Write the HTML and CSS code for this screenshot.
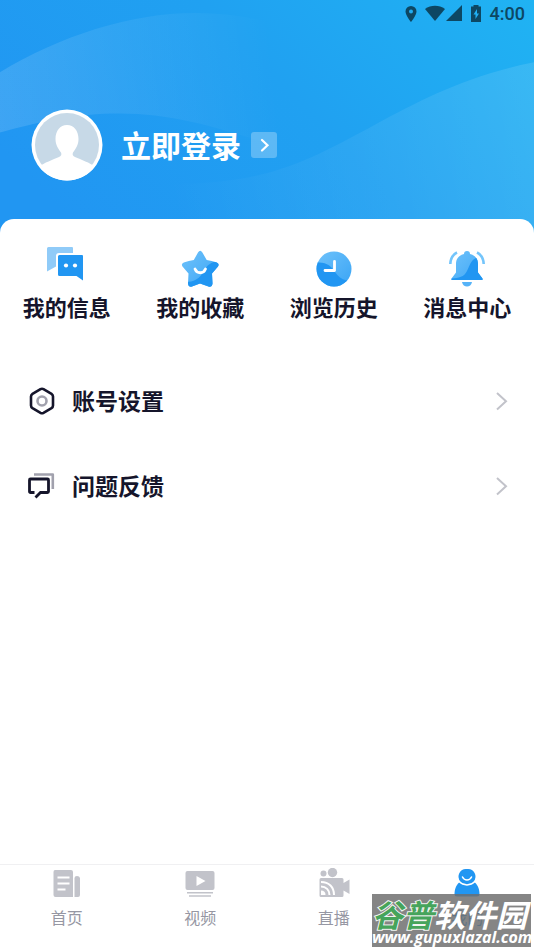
FILE: index.html
```html
<!DOCTYPE html>
<html lang="zh-CN">
<head>
<meta charset="utf-8">
<meta name="viewport" content="width=device-width, initial-scale=1">
<title>我的</title>
<link rel="stylesheet" href="styles.css">
</head>
<body>
<div class="app">
  <header class="hero">
    <svg class="hero-bg" viewBox="0 0 534 240" preserveAspectRatio="none" aria-hidden="true">
      <defs>
        <linearGradient id="sky" gradientUnits="userSpaceOnUse" x1="90" y1="240" x2="440" y2="-110">
          <stop offset="0" stop-color="#2196f2"/><stop offset=".5" stop-color="#20a1f1"/><stop offset="1" stop-color="#20b4f3"/>
        </linearGradient>
        <linearGradient id="waveA" gradientUnits="userSpaceOnUse" x1="0" y1="100" x2="275" y2="70">
          <stop offset="0" stop-color="#fff" stop-opacity=".13"/><stop offset="1" stop-color="#fff" stop-opacity="0"/>
        </linearGradient>
        <linearGradient id="waveB" gradientUnits="userSpaceOnUse" x1="170" y1="200" x2="534" y2="120">
          <stop offset="0" stop-color="#fff" stop-opacity="0"/><stop offset="1" stop-color="#fff" stop-opacity=".11"/>
        </linearGradient>
      </defs>
      <path fill="url(#sky)" d="M0 0H534V240H0z"/>
      <path fill="url(#waveA)" d="M0 72C60 36 130 13 195 13C235 13 270 20 300 32L275 145C220 128 175 113 120 113C75 113 40 121 0 132z"/>
      <path fill="url(#waveB)" d="M60 170C130 184 200 188 260 174C350 153 410 86 534 62V240H60z"/>
    </svg>
    <div class="status">
      <svg width="14" height="18" viewBox="0 0 14 18" aria-hidden="true"><path fill-rule="evenodd" d="M7 1a5.500 5.500 0 0 0-5.500 5.500C1.500 10.500 7 17 7 17s5.500-6.500 5.500-10.500A5.500 5.500 0 0 0 7 1zm0 3.500a2 2 0 1 1 0 4 2 2 0 0 1 0-4z"/></svg>
      <svg class="wifi" width="20" height="18" viewBox="0 0 20 18" aria-hidden="true"><path d="M0 4C6-.300 14-.300 20 4L10 16z"/></svg>
      <svg width="16" height="18" viewBox="0 0 16 18" aria-hidden="true"><path d="M16 0V16H0z"/></svg>
      <svg class="battery" width="12" height="18" viewBox="0 0 12 18" aria-hidden="true"><path fill-rule="evenodd" d="M3.500 0h5v1.500H11V17H1V1.500h2.500zM7 4L3.500 9.500H5.500v4.500L9 8.500H7z"/></svg>
      <span>4:00</span>
    </div>
    <a class="login" href="#login">
      <svg class="avatar" viewBox="0 0 72 72" aria-hidden="true">
        <circle cx="36" cy="36" r="35.500" fill="#fff"/>
        <circle cx="36" cy="36" r="32" fill="#c7d9e7"/>
        <path fill="#fff" d="M36 16c-7 0-11.500 6-11.500 14 0 6 3 10 5.500 13.500 1 2 0 3.500-2 4.500-6 2.500-15 6-20 9.500C14 66 25 71.500 36 71.500S58 66 64 57.500c-5-3.500-14-7-20-9.500-2-1-3-2.500-2-4.500 2.500-3.500 5.500-7.500 5.500-13.500 0-8-4.500-14-11.500-14z"/>
      </svg>
      <span class="login-text">立即登录</span>
      <svg class="login-go" viewBox="0 0 26 26" aria-hidden="true"><rect width="26" height="26" rx="3" fill="#fff" fill-opacity=".27"/><path d="M11 8l5.500 5.200L11 18.500" fill="none" stroke="#fff" stroke-width="2.200" stroke-linecap="round"/></svg>
    </a>
  </header>

  <main class="sheet">
    <nav class="shortcuts" aria-label="快捷入口">
      <a href="#info">
        <svg width="40" height="40" viewBox="0 0 40 40" aria-hidden="true">
          <path fill="#90cbf8" d="M1.500 0H25q1 0 1 1V6H12q-3 0-3 3V19.500L0 24.500V1.500Q0 0 1.500 0z"/>
          <path fill="#2196f2" d="M12.500 8H35q1 0 1 1V33.500L29.500 29H12.500q-1.500 0-1.500-1.500v-18Q11 8 12.500 8z"/>
          <circle cx="19" cy="18.500" r="2.100" fill="#fff"/><circle cx="28" cy="18.500" r="2.100" fill="#fff"/>
        </svg>
        <span>我的信息</span>
      </a>
      <a href="#favorites">
        <svg width="40" height="40" viewBox="0 0 40 40" aria-hidden="true">
          <defs><linearGradient id="pale" x1="0" y1="0" x2="1" y2="1"><stop stop-color="#74c5fb"/><stop offset="1" stop-color="#37a3f5"/></linearGradient>
          <clipPath id="star"><path d="M18 5.500q2.200-3.500 4.400 0l4.300 7.500q5 .800 10 2.500 3 1.200 1.300 4l-6 7 .5 10q-.500 4-4 3L20 36.500l-8 3q-3.500 1-4-3l.5-10-6-7q-1.700-2.800 1.300-4 5-1.700 10-2.500z"/></clipPath></defs>
          <g clip-path="url(#star)"><path fill="url(#pale)" d="M0 0H40V40H0z"/><path fill="#2196f2" d="M40 13C31 15 27 18 24 24C20 32 13 35 6 35V40H40z"/></g>
          <path d="M15 22c2 5 8.500 5 10.500 0" fill="none" stroke="#fff" stroke-width="2.800" stroke-linecap="round"/>
        </svg>
        <span>我的收藏</span>
      </a>
      <a href="#history">
        <svg width="40" height="40" viewBox="0 0 40 40" aria-hidden="true">
          <defs><clipPath id="disc"><circle cx="20" cy="22" r="17.500"/></clipPath></defs>
          <g clip-path="url(#disc)"><path fill="url(#pale)" d="M0 0H40V40H0z"/><path fill="#2196f2" d="M0 16C12 14 17 19 21 25C26 32 31 34 36 33L30 40H0z"/></g>
          <path d="M20.500 14.500v9H11" fill="none" stroke="#fff" stroke-width="2.800" stroke-linecap="round" stroke-linejoin="round"/>
        </svg>
        <span>浏览历史</span>
      </a>
      <a href="#messages">
        <svg width="40" height="40" viewBox="0 0 40 40" aria-hidden="true">
          <defs><clipPath id="bell"><path d="M17 7q0-3 3-3t3 3c5.500 1.500 8 5 8 10v8.500l4.500 6v1.500H4.500v-1.500l4.500-6V17c0-5 2.500-8.500 8-10z"/></clipPath></defs>
          <g clip-path="url(#bell)"><path fill="url(#pale)" d="M0 0H40V40H0z"/><path fill="#2196f2" d="M29 11C24 13 23 18 20 24C17 30 12 31 4 31.500V34H37V11z"/></g>
          <path fill="#56b3f8" d="M15 35h10c-1 6-9 6-10 0z"/>
          <path d="M10 5.500C6 7.500 3.500 12 3.300 17M30 5.500c4 2 6.500 6.500 6.700 11.500" fill="none" stroke="#74c5fb" stroke-width="2.600"/>
        </svg>
        <span>消息中心</span>
      </a>
    </nav>

    <nav class="menu" aria-label="设置">
      <a href="#settings">
        <svg width="28" height="28" viewBox="0 0 28 28" aria-hidden="true"><path d="M12.500 2.200q1.500-.800 3 0l8 4.600q1.500 1 1.500 2.700v9q0 1.700-1.500 2.700l-8 4.600q-1.500.800-3 0l-8-4.600Q3 20.200 3 18.500v-9q0-1.700 1.500-2.700z" fill="none" stroke="#15152b" stroke-width="2.600"/><circle cx="14" cy="14" r="4.500" fill="none" stroke="#a1a1ad" stroke-width="2.600"/></svg>
        <span>账号设置</span>
        <svg class="chevron" width="14" height="20" viewBox="0 0 14 20" aria-hidden="true"><path d="M2 2l9 8.200L2 18.500"/></svg>
      </a>
      <a href="#feedback">
        <svg width="28" height="28" viewBox="0 0 28 28" aria-hidden="true"><path d="M6 2.500H24.800V17" fill="none" stroke="#a1a1ad" stroke-width="2.600" stroke-linejoin="round"/><path d="M6.500 20.500H2.500q-1 0-1-1V8q0-1 1-1H19.500q1 0 1 1V19.500q0 1-1 1H12.500L7.500 25.500" fill="none" stroke="#15152b" stroke-width="2.800"/></svg>
        <span>问题反馈</span>
        <svg class="chevron" width="14" height="20" viewBox="0 0 14 20" aria-hidden="true"><path d="M2 2l9 8.200L2 18.500"/></svg>
      </a>
    </nav>
  </main>

  <footer class="bottom">
    <nav class="tabs" aria-label="主导航">
      <a href="#home">
        <svg width="32" height="32" viewBox="0 0 32 32" aria-hidden="true"><path fill="#c2c3ca" d="M4 2H20q2 0 2 2V29H4.500Q2.500 29 2.500 27V4Q2.500 2 4 2zM23.500 10q0-2 2.500-2t3 2V27q0 2-2 2h-3.500z"/><path stroke="#fff" stroke-width="2" d="M6.500 9.500h12M6.500 15.500h12M6.500 21.500h8"/></svg>
        <span>首页</span>
      </a>
      <a href="#video">
        <svg width="32" height="32" viewBox="0 0 32 32" aria-hidden="true"><rect x="1.500" y="3" width="29" height="19" rx="2" fill="#c2c3ca"/><path fill="#fff" d="M12.500 8l9 5-9 5z"/><path stroke="#c2c3ca" stroke-width="1.600" d="M3 24.800h26M5 28h22"/></svg>
        <span>视频</span>
      </a>
      <a href="#live">
        <svg width="32" height="32" viewBox="0 0 32 32" aria-hidden="true"><g fill="#c2c3ca"><circle cx="5.500" cy="5.500" r="3"/><circle cx="14.500" cy="4.500" r="4.700"/><path d="M3 10H24q1.500 0 1.500 1.500V15l6-3.500V26l-6-3.500v5q0 1.500-1.500 1.500H3q-1.500 0-1.500-1.500v-16Q1.500 10 3 10z"/></g><path d="M3 14c8 0 13 5 13 13M3 18.500c5 0 8.500 3.500 8.500 8.500" fill="none" stroke="#fff" stroke-width="2"/><path fill="#fff" d="M3 22.500q4.500 0 4.500 4.500H3z"/></svg>
        <span>直播</span>
      </a>
      <a class="active" href="#me" aria-current="page">
        <svg width="32" height="32" viewBox="0 0 32 32" aria-hidden="true"><path fill="#2196f2" d="M16 1a7.500 7.500 0 0 1 6.500 12.500C26.500 16 28.500 21 28.500 26q0 2.500-2.500 2.500H6q-2.500 0-2.500-2.500C3.500 21 5.500 16 9.500 13.500A7.500 7.500 0 0 1 16 1z"/><path d="M8 13.500c4.500 4.500 11.500 4.500 16 0" fill="none" stroke="#fff" stroke-width="1.500"/><path d="M11.500 9c2 4 7 4 9 0" fill="none" stroke="#fff" stroke-width="1.600" stroke-linecap="round"/></svg>
        <span>我的</span>
      </a>
    </nav>
    <div class="stamp">
      <div class="stamp-name"><span>谷普</span>软件园</div>
      <div class="stamp-url">www.gupuxlazal.com</div>
    </div>
  </footer>
</div>
</body>
</html>
```
FILE: styles.css
```css
* { box-sizing: border-box; }

body {
  margin: 0;
  background: #fff;
  color: #15152b;
  font-family: Roboto, "Noto Sans CJK SC", sans-serif;
}

a { color: inherit; text-decoration: none; }
svg { display: block; flex: none; }

.app {
  min-height: 100vh;
  display: flex;
  flex-direction: column;
}

.hero {
  position: relative;
  padding-bottom: 60px;
}

.hero-bg {
  position: absolute;
  z-index: -1;
  top: 0;
  left: 0;
  width: 100%;
  height: 100%;
}

.status {
  display: flex;
  justify-content: flex-end;
  align-items: center;
  height: 27px;
  padding-right: 9px;
  fill: #0d4763;
  color: #0d4763;
  font-size: 18px;
  font-weight: 500;
}

.status .wifi { margin-left: 7px; margin-right: 1px; }
.status .battery { margin-left: 8px; margin-right: 8px; }

.login {
  display: flex;
  align-items: center;
  margin-top: 82px;
  padding-left: 31px;
  color: #fff;
}

.avatar { width: 72px; height: 72px; }

.login-text {
  margin: 0 10px 0 18px;
  padding-top: 4px;
  font-size: 30px;
  line-height: 44px;
  font-weight: 700;
}

.login-go { width: 26px; height: 26px; }

.sheet {
  flex: 1;
  margin-top: -22px;
  position: relative;
  background: #fff;
  border-radius: 14px 14px 0 0;
  padding-top: 28px;
}

.shortcuts,
.tabs {
  display: grid;
  grid-template-columns: repeat(4, 1fr);
}

.shortcuts a,
.tabs a {
  display: flex;
  flex-direction: column;
  align-items: center;
}

.shortcuts span {
  margin-top: 6px;
  font-size: 22px;
  line-height: 32px;
  font-weight: 700;
}

.menu { margin-top: 33px; }

.menu a {
  display: flex;
  align-items: center;
  gap: 16px;
  height: 85px;
  padding: 0 25px 0 28px;
  font-size: 23px;
  line-height: 32px;
  font-weight: 700;
}

.menu span { padding-top: 4px; }

.menu .chevron {
  margin-left: auto;
  fill: none;
  stroke: #c2c3ca;
  stroke-width: 2;
}

.bottom {
  position: relative;
  height: 86px;
  border-top: 1px solid #f0f0f2;
  background: #fff;
}

.tabs { padding-top: 3px; }

.tabs span {
  margin-top: 7px;
  color: #9697a3;
  font-size: 16px;
  line-height: 24px;
}

.tabs .active span { color: #2196f2; }

.stamp {
  position: absolute;
  right: 3px;
  bottom: 3px;
  width: 159px;
  height: 53px;
  padding-top: 4px;
  background: rgba(110, 110, 110, .84);
  color: #fff;
  font-style: italic;
  font-weight: 700;
  white-space: nowrap;
}

.stamp-name {
  font-family: "Noto Sans CJK SC", sans-serif;
  font-size: 31px;
  line-height: 31px;
}

.stamp-name span {
  color: #46a45b;
  -webkit-text-stroke: 2px #f2f5f2;
  paint-order: stroke fill;
}

.stamp-url {
  font-family: "Open Sans", sans-serif;
  font-size: 16px;
  line-height: 16px;
}
```
